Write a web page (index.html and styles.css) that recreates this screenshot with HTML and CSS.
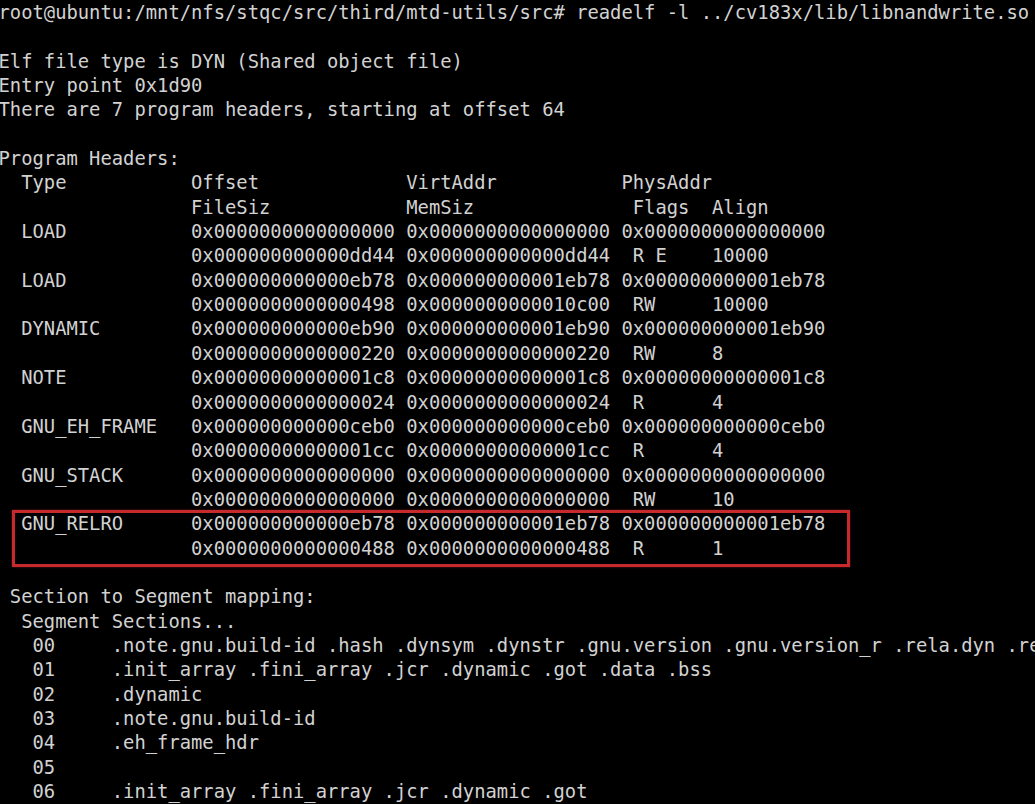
FILE: index.html
```html
<!DOCTYPE html>
<html>
<head>
<meta charset="utf-8">
<link rel="stylesheet" href="styles.css">
</head>
<body>
<div class="term">
<pre class="out">root@ubuntu:/mnt/nfs/stqc/src/third/mtd-utils/src# readelf -l ../cv183x/lib/libnandwrite.so

Elf file type is DYN (Shared object file)
Entry point 0x1d90
There are 7 program headers, starting at offset 64

Program Headers:
  Type           Offset             VirtAddr           PhysAddr
                 FileSiz            MemSiz              Flags  Align
  LOAD           0x0000000000000000 0x0000000000000000 0x0000000000000000
                 0x000000000000dd44 0x000000000000dd44  R E    10000
  LOAD           0x000000000000eb78 0x000000000001eb78 0x000000000001eb78
                 0x0000000000000498 0x0000000000010c00  RW     10000
  DYNAMIC        0x000000000000eb90 0x000000000001eb90 0x000000000001eb90
                 0x0000000000000220 0x0000000000000220  RW     8
  NOTE           0x00000000000001c8 0x00000000000001c8 0x00000000000001c8
                 0x0000000000000024 0x0000000000000024  R      4
  GNU_EH_FRAME   0x000000000000ceb0 0x000000000000ceb0 0x000000000000ceb0
                 0x00000000000001cc 0x00000000000001cc  R      4
  GNU_STACK      0x0000000000000000 0x0000000000000000 0x0000000000000000
                 0x0000000000000000 0x0000000000000000  RW     10
  GNU_RELRO      0x000000000000eb78 0x000000000001eb78 0x000000000001eb78
                 0x0000000000000488 0x0000000000000488  R      1

 Section to Segment mapping:
  Segment Sections...
   00     .note.gnu.build-id .hash .dynsym .dynstr .gnu.version .gnu.version_r .rela.dyn .re
   01     .init_array .fini_array .jcr .dynamic .got .data .bss
   02     .dynamic
   03     .note.gnu.build-id
   04     .eh_frame_hdr
   05     
   06     .init_array .fini_array .jcr .dynamic .got
</pre>
<div class="highlight"></div>
</div>
</body>
</html>
```

FILE: styles.css
```css
html, body {
  margin: 0;
  padding: 0;
  background: #000;
  width: 1035px;
  height: 804px;
  overflow: hidden;
}

.term {
  position: relative;
  width: 1035px;
  height: 804px;
  overflow: hidden;
  background: #000;
}

.out {
  margin: 0 0 0 -1.5px;
  padding: 1px 0 0 0;
  font-family: "DejaVu Sans Mono", monospace;
  font-size: 18.82px;
  line-height: 24.35px;
  color: #d2d2d2;
  white-space: pre;
}

.highlight {
  position: absolute;
  left: 12px;
  top: 510px;
  width: 832px;
  height: 51px;
  border: 3px solid #c62a2c;
  box-shadow: 0 0 2px rgba(200, 40, 40, 0.6);
}
```
